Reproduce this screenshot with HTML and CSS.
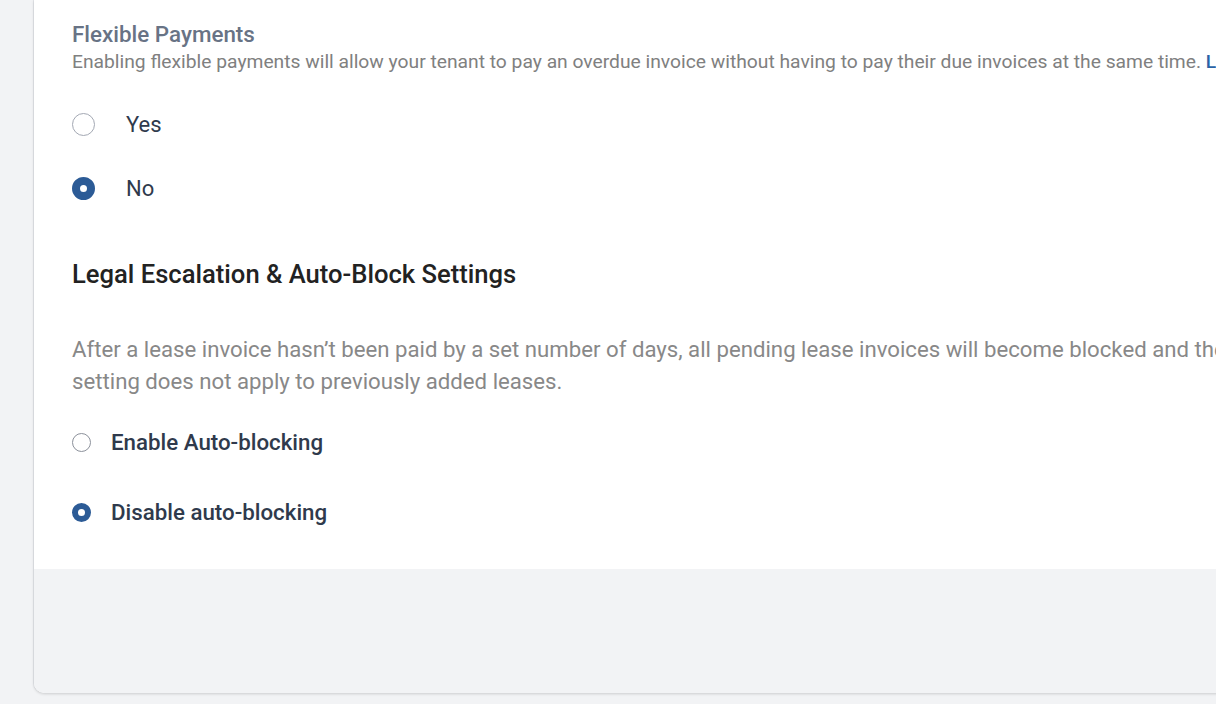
FILE: index.html
```html
<!DOCTYPE html>
<html lang="en">
<head>
<meta charset="UTF-8">
<meta name="viewport" content="width=device-width, initial-scale=1.0">
<title>Payment Settings</title>
<link rel="stylesheet" href="styles.css">
</head>
<body>

<div class="page">
  <div class="card">
    <div class="card-body">

      <div class="field">
        <div class="field-title">Flexible Payments</div>
        <div class="field-help">Enabling flexible payments will allow your tenant to pay an overdue invoice without having to pay their due invoices at the same time. <a href="#">Learn more</a></div>

        <div class="options">
          <label class="option">
            <span class="radio"></span>
            <span class="option-label">Yes</span>
          </label>
          <label class="option">
            <span class="radio checked"></span>
            <span class="option-label">No</span>
          </label>
        </div>
      </div>

      <h2 class="section-title">Legal Escalation &amp; Auto-Block Settings</h2>
      <p class="section-text">After a lease invoice hasn’t been paid by a set number of days, all pending lease invoices will become blocked and the tenant will be escalated to legal. This<br>setting does not apply to previously added leases.</p>

      <div class="options small">
        <label class="option">
          <span class="radio"></span>
          <span class="option-label">Enable Auto-blocking</span>
        </label>
        <label class="option">
          <span class="radio checked"></span>
          <span class="option-label">Disable auto-blocking</span>
        </label>
      </div>

    </div>
    <div class="card-footer"></div>
  </div>
</div>

</body>
</html>
```

FILE: styles.css
```css
html, body {
  margin: 0;
  padding: 0;
  background: #f2f3f5;
  overflow: hidden;
}
body {
  font-family: Roboto, "Noto Sans", Arial, sans-serif;
  color: #2f3a4c;
}
.page {
  padding: 0 0 11px 34px;
}
.card {
  width: 1260px;
  background: #fff;
  border-radius: 0 0 10px 10px;
  box-shadow: 0 1px 3px rgba(0, 0, 0, 0.16), -1px 0 0 #e3e5e9;
  overflow: hidden;
}
.card-body {
  padding: 21px 0 45px 38px;
}
.card-footer {
  height: 124px;
  background: #f2f3f5;
}

.field-title {
  font-size: 22.4px;
  font-weight: 500;
  color: #687385;
  line-height: 26px;
}
.field-help {
  margin-top: 2px;
  font-size: 19.25px;
  color: #808080;
  line-height: 26px;
  white-space: nowrap;
}
.field-help a {
  color: #2a63a6;
  font-weight: 500;
  text-decoration: none;
}

.options {
  display: flex;
  flex-direction: column;
  gap: 40px;
  margin-top: 37px;
}
.option {
  display: flex;
  align-items: center;
  gap: 31px;
  height: 24px;
  font-size: 22px;
  color: #2f3a4c;
}
.radio {
  width: 23px;
  height: 23px;
  border: 1px solid #a3a8b3;
  border-radius: 50%;
  box-sizing: border-box;
  background: #fff;
  flex: none;
}
.radio.checked {
  border: 8px solid #2c5b96;
}

.section-title {
  margin: 59px 0 0;
  font-size: 25.6px;
  font-weight: 500;
  color: #222;
  line-height: 30px;
}
.section-text {
  margin: 44px 0 0;
  font-size: 22.2px;
  line-height: 32px;
  color: #888;
  white-space: nowrap;
}

.options.small {
  gap: 46px;
  margin-top: 33px;
}
.options.small .option {
  gap: 20px;
  font-size: 22.3px;
  font-weight: 500;
}
.options.small .radio {
  width: 19px;
  height: 19px;
  border-color: #8c919b;
}
.options.small .radio.checked {
  border: 6.5px solid #2c5b96;
}
```
